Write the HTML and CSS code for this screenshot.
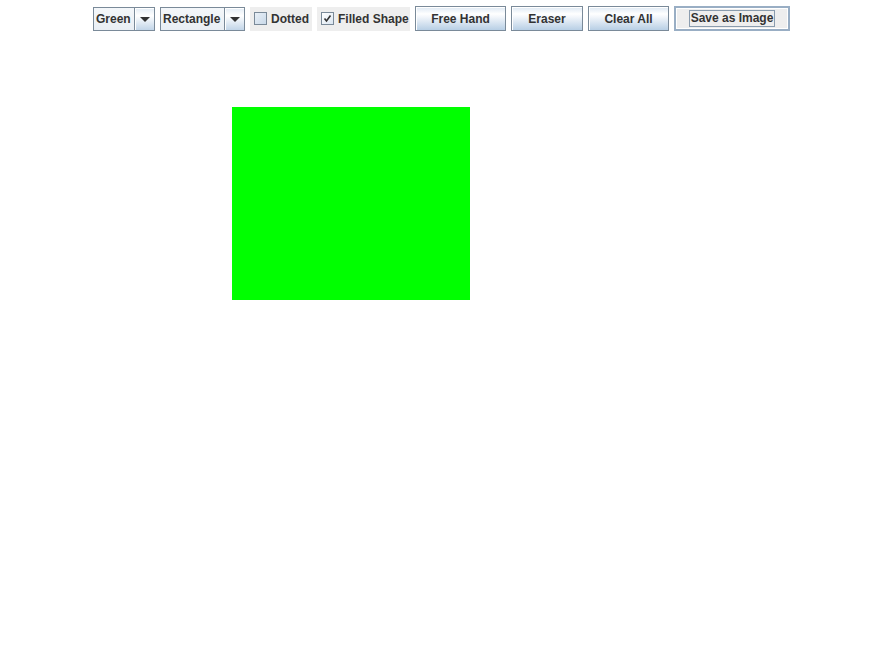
FILE: index.html
```html
<!DOCTYPE html>
<html>
<head>
<meta charset="utf-8">
<link rel="stylesheet" href="styles.css">
</head>
<body>
<div class="toolbar">
  <div class="combo combo-green">
    <div class="combo-value">Green</div>
    <div class="combo-arrow"><span class="tri"></span></div>
  </div>
  <div class="combo combo-shape">
    <div class="combo-value">Rectangle</div>
    <div class="combo-arrow"><span class="tri"></span></div>
  </div>
  <label class="check check-dotted"><span class="box"></span>Dotted</label>
  <label class="check check-filled"><span class="box checked"><svg width="9" height="9" viewBox="0 0 9 9"><path d="M1.5 4.5 L3.5 7 L7.5 1.5" fill="none" stroke="#333" stroke-width="1.6"/></svg></span>Filled Shape</label>
  <button class="btn btn-free">Free Hand</button>
  <button class="btn btn-eraser">Eraser</button>
  <button class="btn btn-clear">Clear All</button>
  <button class="btn btn-save focused"><span class="focus-ring">Save as Image</span></button>
</div>
<div class="canvas">
  <div class="shape"></div>
</div>
</body>
</html>
```
FILE: styles.css
```css
html, body {
  margin: 0;
  padding: 0;
  background: #ffffff;
  width: 884px;
  height: 661px;
  overflow: hidden;
}
body {
  font-family: "Liberation Sans", Arial, sans-serif;
  font-weight: bold;
  font-size: 12px;
  color: #333333;
}
.toolbar {
  display: flex;
  justify-content: center;
  align-items: center;
  gap: 5px;
  padding-top: 5px;
  padding-right: 1px;
  height: 27px;
  white-space: nowrap;
}
.toolbar > * {
  flex-shrink: 0;
}
.combo {
  display: flex;
  height: 24px;
  box-sizing: border-box;
  border: 1px solid #7a8a99;
  background: #eef2f7;
}
.combo-value {
  display: flex;
  align-items: center;
  padding: 0 4px 0 2px;
  background: linear-gradient(#f4f7fa, #e9eef4);
  border-right: 1px solid #7a8a99;
}
.combo-green .combo-value { width: 34px; }
.combo-shape .combo-value { width: 57px; }
.combo-arrow {
  width: 19px;
  display: flex;
  align-items: center;
  justify-content: center;
  background: linear-gradient(#e3ecf5 0%, #ffffff 35%, #c2d5e8 100%);
  box-shadow: inset 1px 1px 0 #ffffff;
}
.tri {
  width: 0;
  height: 0;
  border-left: 5px solid transparent;
  border-right: 5px solid transparent;
  border-top: 5px solid #333333;
  margin-top: 1px;
}
.check {
  display: flex;
  align-items: center;
  height: 24px;
  background: #eeeeee;
  padding: 0 0 0 4px;
  box-sizing: border-box;
}
.check-dotted { width: 62px; }
.check-filled { width: 93px; }
.box {
  width: 13px;
  height: 13px;
  flex-shrink: 0;
  box-sizing: border-box;
  border: 1px solid #7a8a99;
  background: linear-gradient(135deg, #e9f0f7, #c9d9e9);
  margin-right: 4px;
  display: flex;
  align-items: center;
  justify-content: center;
}
.box.checked {
  background: linear-gradient(135deg, #ffffff, #dbe6f1);
}
.btn {
  font: inherit;
  color: #333333;
  height: 25px;
  box-sizing: border-box;
  border: 1px solid #7a8a99;
  background: linear-gradient(#dde8f3 0%, #ffffff 30%, #f1f5fa 45%, #b8cfe5 100%);
  box-shadow: inset 1px 1px 0 #ffffff;
  padding: 0;
  margin: 0;
  display: flex;
  align-items: center;
  justify-content: center;
  white-space: nowrap;
}
.btn-free { width: 91px; }
.btn-eraser { width: 72px; }
.btn-clear { width: 81px; }
.btn-save {
  width: 116px;
  border: 2px solid #99aec4;
  background: #eeeeee;
  box-shadow: inset 0 0 0 1px #ffffff;
}
.focus-ring {
  border: 1px solid #8a9cae;
  padding: 1px;
  line-height: 13px;
}
.canvas {
  position: relative;
  height: 629px;
}
.shape {
  position: absolute;
  left: 232px;
  top: 75px;
  width: 238px;
  height: 193px;
  background: #00ff00;
}
```
